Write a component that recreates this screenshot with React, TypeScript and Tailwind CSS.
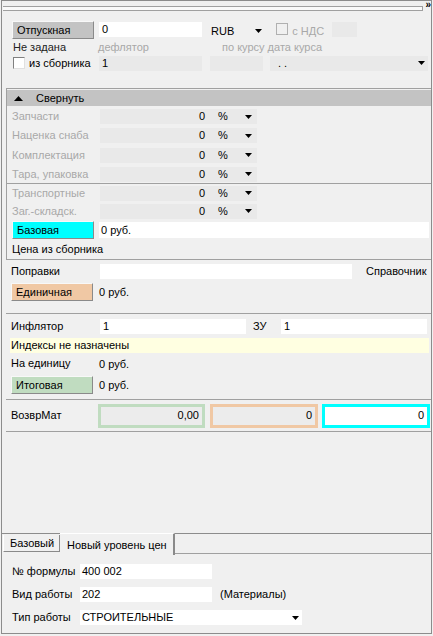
import React from "react";

function Down({ className = "" }: { className?: string }) {
  return (
    <svg width="7" height="4" viewBox="0 0 7 4" className={className}>
      <polygon points="0,0 7,0 3.5,4" fill="#000" />
    </svg>
  );
}

function Btn({ label, bg }: { label: string; bg: string }) {
  return (
    <div
      className={`w-[82px] h-[18px] flex items-center pl-[4px] border-t border-l border-t-[#f8f8f8] border-l-[#f8f8f8] border-b border-r border-b-[#8a8a8a] border-r-[#8a8a8a] ${bg}`}
    >
      {label}
    </div>
  );
}

function PctRow({ label, h }: { label: string; h: string }) {
  return (
    <div className={`flex items-center ${h}`}>
      <div className="ml-[5px] w-[88px] text-[#a8a8a8]">{label}</div>
      <div className="w-[157px] h-[15px] bg-[#e9e9e9] flex items-center">
        <div className="w-[105px] text-right">0</div>
        <div className="ml-[13px] w-[20px]">%</div>
        <Down className="ml-[7px]" />
      </div>
    </div>
  );
}

export default function App() {
  return (
    <div className="w-[433px] h-[636px] bg-[#f0f0f0] font-['Liberation_Sans',Arial,sans-serif] text-[11px] leading-none text-black overflow-hidden">
      <div className="ml-[1px] w-[431px] h-[634px] border border-[#8c8c8c] flex flex-col relative">
        {/* header */}
        <div className="h-[11px] flex items-start">
          <div className="mt-[5px] ml-[1px] w-[424px] h-[5px] border-t border-b border-r border-[#a0a0a0] bg-[#fafafa]" />
          <div className="ml-[2px] -mt-[1px] text-[10px] font-bold">»</div>
        </div>

        {/* section 1 */}
        <div className="h-[76px] pt-[9px] flex flex-col">
          <div className="flex items-start h-[18px]">
            <div className="ml-[10px]">
              <Btn label="Отпускная" bg="bg-[#c3c3c3]" />
            </div>
            <div className="ml-[5px] mt-[1px] w-[103px] h-[15px] bg-white flex items-center pl-[3px]">0</div>
            <div className="ml-[9px] mt-[5px]">RUB</div>
            <Down className="ml-[21px] mt-[8px]" />
            <div className="ml-[14px] mt-[2px] w-[12px] h-[12px] border border-[#b0b0b0] bg-[#f0f0f0]" />
            <div className="ml-[4px] mt-[5px] text-[#a8a8a8]">с НДС</div>
            <div className="ml-[8px] mt-[1px] w-[25px] h-[15px] bg-[#e9e9e9]" />
          </div>
          <div className="flex items-center h-[16px]">
            <div className="ml-[11px] w-[85px] text-[#222]">Не задана</div>
            <div className="w-[124px] text-[#a8a8a8]">дефлятор</div>
            <div className="text-[#a8a8a8]">по курсу дата курса</div>
          </div>
          <div className="flex items-center h-[16px]">
            <div className="ml-[11px] w-[12px] h-[12px] bg-white border border-t-[#808080] border-l-[#808080] border-b-[#e0e0e0] border-r-[#e0e0e0]" />
            <div className="ml-[4px] w-[70px]">из сборника</div>
            <div className="w-[103px] h-[15px] bg-[#e9e9e9] flex items-center pl-[3px]">1</div>
            <div className="ml-[8px] w-[53px] h-[15px] bg-[#e9e9e9]" />
            <div className="ml-[7px] w-[158px] h-[15px] bg-[#e9e9e9] flex items-center pl-[8px]">
              <span className="flex-1">. .</span>
              <Down className="mr-[3px]" />
            </div>
          </div>
        </div>

        {/* group 2 */}
        <div className="ml-[4px] h-[171px] border-t border-l border-[#a0a0a0] flex flex-col">
          <div className="mt-[1px] h-[16px] bg-[#c3c3c3] flex items-center">
            <svg width="9" height="5" viewBox="0 0 9 5" className="ml-[7px]">
              <polygon points="0,5 9,5 4.5,0" fill="#000" />
            </svg>
            <span className="ml-[13px]">Свернуть</span>
          </div>
          <div className="mt-[1px]" />
          <PctRow label="Запчасти" h="h-[19px]" />
          <PctRow label="Наценка снаба" h="h-[19px]" />
          <PctRow label="Комплектация" h="h-[20px]" />
          <PctRow label="Тара, упаковка" h="h-[18px]" />
          <div className="border-t border-[#a0a0a0]" />
          <PctRow label="Транспортные" h="h-[18px]" />
          <PctRow label="Заг.-складск." h="h-[18px]" />
          <div className="flex items-start h-[18px] mt-[1px]">
            <div className="ml-[5px]">
              <Btn label="Базовая" bg="bg-[#00ffff]" />
            </div>
            <div className="ml-[5px] mt-[1px] w-[330px] h-[16px] bg-white flex items-center pl-[2px]">0 руб.</div>
          </div>
          <div className="h-[20px] flex items-center ml-[5px]">Цена из сборника</div>
        </div>

        {/* section 3 */}
        <div className="ml-[4px] h-[54px] border-t border-[#a0a0a0] flex flex-col">
          <div className="flex items-center h-[15px] mt-[4px]">
            <div className="ml-[5px] w-[89px]">Поправки</div>
            <div className="w-[252px] h-[15px] bg-white" />
            <div className="ml-[14px]">Справочник</div>
          </div>
          <div className="flex items-center h-[18px] mt-[4px]">
            <div className="ml-[5px]">
              <Btn label="Единичная" bg="bg-[#f0c8a4]" />
            </div>
            <div className="ml-[6px]">0 руб.</div>
          </div>
        </div>

        {/* section 4 */}
        <div className="ml-[4px] h-[86px] border-t border-[#a0a0a0] flex flex-col">
          <div className="flex items-center h-[15px] mt-[5px]">
            <div className="ml-[5px] w-[89px]">Инфлятор</div>
            <div className="w-[146px] h-[15px] bg-white flex items-center pl-[3px]">1</div>
            <div className="ml-[7px] w-[28px]">ЗУ</div>
            <div className="w-[146px] h-[15px] bg-white flex items-center pl-[3px]">1</div>
          </div>
          <div className="ml-[4px] mt-[4px] w-[419px] h-[15px] bg-[#ffffe1] flex items-center pl-[1px]">
            Индексы не назначены
          </div>
          <div className="flex items-center h-[17px] mt-[2px]">
            <div className="ml-[5px] w-[88px]">На единицу</div>
            <div className="mt-[2px]">0 руб.</div>
          </div>
          <div className="flex items-center h-[18px] mt-[4px]">
            <div className="ml-[5px]">
              <Btn label="Итоговая" bg="bg-[#c0dcc0]" />
            </div>
            <div className="ml-[6px]">0 руб.</div>
          </div>
        </div>

        {/* section 5 */}
        <div className="ml-[4px] h-[33px] border-t border-b border-[#a0a0a0] flex items-center">
          <div className="ml-[5px] w-[87px]">ВозврМат</div>
          <div className="w-[107px] h-[24px] border-[3px] border-[#c0dcc0] bg-[#ececec] flex items-center justify-end pr-[3px]">0,00</div>
          <div className="ml-[5px] w-[108px] h-[24px] border-[3px] border-[#f0c8a4] bg-[#ececec] flex items-center justify-end pr-[3px]">0</div>
          <div className="ml-[4px] w-[108px] h-[24px] border-[3px] border-[#00ffff] bg-white flex items-center justify-end pr-[3px]">0</div>
        </div>

        <div className="flex-1" />

        {/* tabs */}
        <div className="h-[22px] flex items-stretch">
          <div className="w-[58px] border-t border-[#8c8c8c] pl-[1px]">
            <div className="mt-[1px] w-[57px] h-[17px] border-l border-l-white border-b border-r border-b-[#8a8a8a] border-r-[#8a8a8a] flex items-center pl-[6px]">
              Базовый
            </div>
          </div>
          <div className="w-[115px] border-t border-t-white border-r-2 border-r-[#8a8a8a] flex items-center pl-[7px] pt-[2px]">
            Новый уровень цен
          </div>
          <div className="flex-1 border-t border-[#8c8c8c] flex flex-col">
            <div className="flex-1" />
            <div className="border-b border-[#a0a0a0] mb-[1px]" />
          </div>
        </div>

        {/* bottom panel */}
        <div className="flex-1 max-h-[78px] flex flex-col pt-[9px]">
          <div className="flex items-center h-[15px]">
            <div className="ml-[10px] w-[68px]">№ формулы</div>
            <div className="w-[132px] h-[15px] bg-white flex items-center pl-[2px]">400 002</div>
          </div>
          <div className="flex items-center h-[15px] mt-[8px]">
            <div className="ml-[10px] w-[68px]">Вид работы</div>
            <div className="w-[132px] h-[15px] bg-white flex items-center pl-[2px]">202</div>
            <div className="ml-[8px]">(Материалы)</div>
          </div>
          <div className="flex items-center h-[15px] mt-[8px]">
            <div className="ml-[10px] w-[68px]">Тип работы</div>
            <div className="w-[222px] h-[15px] bg-white flex items-center pl-[2px]">
              <span className="flex-1">СТРОИТЕЛЬНЫЕ</span>
              <Down className="mr-[3px]" />
            </div>
          </div>
        </div>
      </div>
    </div>
  );
}
